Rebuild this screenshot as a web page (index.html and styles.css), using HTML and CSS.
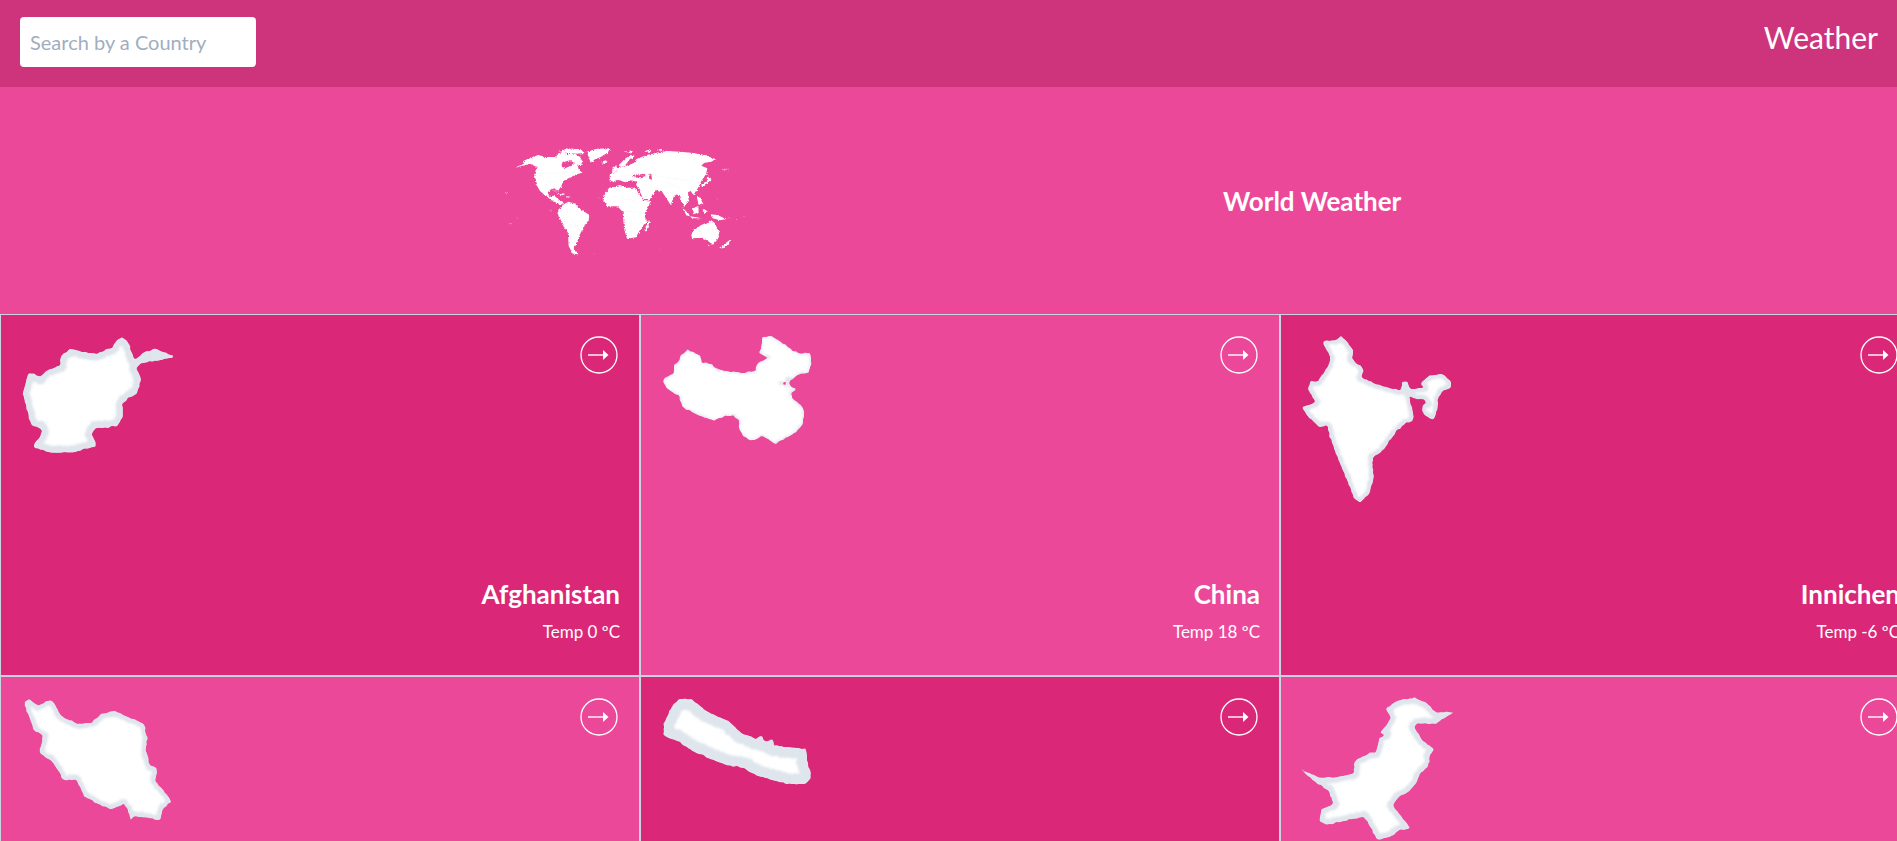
FILE: index.html
```html
<!DOCTYPE html>
<html lang="en">
<head>
<meta charset="utf-8">
<title>Weather</title>
<link rel="stylesheet" href="styles.css">
</head>
<body>
<svg class="defs" width="0" height="0" aria-hidden="true">
  <defs>
    <symbol id="arrow" viewBox="0 0 38 38">
      <circle cx="19" cy="19" r="18" fill="none" stroke="#fff" stroke-width="1.3"/>
      <path d="M8 19H24" stroke="#fff" stroke-width="1.4" fill="none"/>
      <path d="M23 14L28.5 19L23 24Z" fill="#fff"/>
    </symbol>
    <filter id="rough" filterUnits="userSpaceOnUse" primitiveUnits="userSpaceOnUse" x="-100" y="-100" width="1500" height="900" color-interpolation-filters="sRGB">
      <feTurbulence type="turbulence" baseFrequency="0.09" numOctaves="2" seed="4" result="noise"/>
      <feDisplacementMap in="SourceGraphic" in2="noise" scale="9" xChannelSelector="R" yChannelSelector="G" result="moved"/>
      <feGaussianBlur in="moved" stdDeviation="3.2"/>
      <feComponentTransfer>
        <feFuncA type="linear" slope="3.5" intercept="-1.25"/>
      </feComponentTransfer>
    </filter>
    <filter id="soft" filterUnits="userSpaceOnUse" primitiveUnits="userSpaceOnUse" x="0" y="0" width="840" height="420" color-interpolation-filters="sRGB">
      <feTurbulence type="turbulence" baseFrequency="0.12" numOctaves="2" seed="7" result="noise"/>
      <feDisplacementMap in="SourceGraphic" in2="noise" scale="4" xChannelSelector="R" yChannelSelector="G" result="moved"/>
      <feGaussianBlur in="moved" stdDeviation="1.6"/>
    </filter>
  </defs>
</svg>
<header class="topbar">
  <input class="search" type="text" placeholder="Search by a Country">
  <div class="brand">Weather</div>
</header>
<section class="hero">
  <svg class="world" viewBox="0 0 840 420" width="280" height="140" role="img" aria-label="World map">
    <g filter="url(#soft)">
      <path class="continent" fill-rule="evenodd" d="M103 110L128 100 130 90 150 80 175 72 195 78 225 78 232 68 250 62 262 70 285 68 300 78 308 92 300 104 292 100 296 115 307 125 290 130 268 140 250 150 244 165 234 180 222 172 210 175 203 185 210 197 225 192 232 205 250 213 246 222 232 217 215 208 198 195 180 180 168 160 162 135 170 108 150 98 125 105ZM248 92L272 88 282 96 272 104 256 112 244 104Z"/>
      <path class="continent" d="M235 60L262 52 300 55 314 66 290 68 262 66ZM320 62L350 53 390 52 384 64 362 78 345 85 332 95 326 78ZM228 185L255 188 245 193ZM255 196L272 197 262 201Z"/>
      <path class="continent" d="M232 240L248 222 265 212 285 218 298 232 328 252 326 268 312 285 300 310 292 330 280 350 296 370 278 368 266 345 264 305 250 285 238 265Z"/>
      <path class="continent" d="M368 205L372 188 388 170 420 162 440 170 465 170 478 190 490 208 515 208 500 232 494 250 498 272 478 300 468 318 452 322 440 320 432 290 428 242 412 226 382 226ZM503 270L510 268 500 298 493 298Z"/>
      <path class="continent" fill-rule="evenodd" d="M388 148L390 128 408 122 416 108 440 104 462 96 468 85 500 72 530 65 560 60 600 62 640 66 675 72 708 85 690 92 672 96 664 104 682 112 678 130 664 150 656 168 640 192 632 180 624 184 626 206 612 226 602 206 596 192 584 190 572 222 558 200 545 180 528 176 518 190 510 205 490 204 476 175 468 160 472 152 450 148 436 154 412 146 400 152ZM455 132L490 128 498 136 470 140ZM506 128L514 128 516 146 508 144Z"/>
      <path class="continent" d="M398 108L410 103 412 118 396 126ZM416 103L434 84 452 72 464 74 450 84 436 102 424 108ZM364 92L378 88 382 94 368 98ZM430 62L460 58 455 65ZM490 62L510 55 514 62ZM530 56L545 54 548 60ZM605 228L630 252 620 254ZM636 232L655 225 656 244 640 250ZM690 250L712 252 738 264 720 268 698 262ZM630 256L666 262 636 262ZM650 195L660 198 668 216 656 222ZM682 128L692 148 666 168 664 160 680 150ZM668 234L682 240 672 250ZM634 312L640 296 664 282 686 272 692 266 704 276 718 305 712 322 698 340 684 330 668 320 636 322ZM718 350L752 325 745 340 722 352ZM683 340L691 340 686 346Z"/>
      <path class="dots" d="M75 185H82M108 260H112M88 278H92M210 238H214M355 200H358M535 355H538M765 265H768M790 255H794M725 115H745M340 368H343M745 260H755M710 205H714"/>
      <path class="borders" d="M170 128L300 122M205 175L232 180M265 250L300 300M250 270L290 290M420 200L470 210M430 240L490 245M440 280L490 270M500 130L640 150M545 150L600 170M460 120L500 140M415 135L460 130"/>
    </g>
  </svg>
  <h1 class="hero-title">World Weather</h1>
</section>
<main class="grid">
  <article class="card dark">
    <div class="card-top">
      <svg class="shape" viewBox="3 15 600 480" width="200" height="160">
        <defs>
          <path id="af" d="M97 408L125 365 118 350 92 345 72 270 66 250 72 225 82 187 100 190 118 200 135 180 178 165 180 135 210 115 240 122 285 130 335 110 350 85 368 80 385 100 400 148 430 125 465 115 522 138 470 150 430 155 405 170 420 205 410 250 385 260 365 280 365 320 350 345 320 350 285 350 272 370 288 405 215 425 150 425Z"/>
          <clipPath id="af-clip"><use href="#af"/></clipPath>
        </defs>
        <g filter="url(#rough)"><use class="land edge-af" href="#af" clip-path="url(#af-clip)"/></g>
      </svg>
      <svg class="go"><use href="#arrow"/></svg>
    </div>
    <div class="info">
      <h2 class="name">Afghanistan</h2>
      <p class="temp">Temp 0 ºC</p>
    </div>
  </article>
  <article class="card light">
    <div class="card-top">
      <svg class="shape" viewBox="603 15 600 480" width="200" height="160">
        <defs>
          <path id="cn" d="M665 210L680 197 698 190 700 165 715 150 720 135 740 117 780 135 783 155 810 160 835 178 870 183 910 187 945 180 950 157 985 140 958 128 965 80 990 75 1030 100 1055 120 1085 130 1108 125 1112 158 1105 185 1075 190 1055 205 1020 218 1035 225 1040 205 1050 208 1045 225 1068 235 1050 245 1055 262 1085 290 1090 305 1085 340 1065 365 1010 395 1005 400 965 375 935 390 910 380 895 355 895 330 880 315 855 315 820 330 780 315 725 290 715 255 680 235Z"/>
          <clipPath id="cn-clip"><use href="#cn"/></clipPath>
        </defs>
        <g filter="url(#rough)"><use class="land edge-cn" href="#cn" clip-path="url(#cn-clip)"/></g>
      </svg>
      <svg class="go"><use href="#arrow"/></svg>
    </div>
    <div class="info">
      <h2 class="name">China</h2>
      <p class="temp">Temp 18 ºC</p>
    </div>
  </article>
  <article class="card dark">
    <div class="card-top">
      <svg class="shape" viewBox="3 15 600 600" width="200" height="200">
        <defs>
          <path id="in" d="M180 76L200 95 218 120 212 145 250 175 240 200 290 222 360 240 365 212 380 212 385 235 430 232 420 215 445 195 485 188 510 210 510 230 485 240 472 265 468 305 460 328 447 322 425 305 425 282 440 280 430 265 400 265 385 250 392 285 400 330 370 340 340 370 305 420 275 440 278 500 268 545 240 575 220 565 205 520 180 465 150 385 140 345 115 348 80 315 65 290 105 275 80 232 92 212 112 212 145 160 148 140 125 92 165 88Z"/>
          <clipPath id="in-clip"><use href="#in"/></clipPath>
        </defs>
        <g filter="url(#rough)"><use class="land edge-in" href="#in" clip-path="url(#in-clip)"/></g>
      </svg>
      <svg class="go"><use href="#arrow"/></svg>
    </div>
    <div class="info">
      <h2 class="name">Innichen</h2>
      <p class="temp">Temp -6 ºC</p>
    </div>
  </article>
  <article class="card light">
    <div class="card-top">
      <svg class="shape" viewBox="3 -9 600 480" width="200" height="160">
        <defs>
          <path id="ir" d="M70 65L85 55 110 75 150 57 165 75 180 105 230 130 275 125 300 100 345 92 430 130 440 170 435 210 448 255 470 265 462 300 498 340 512 365 485 385 478 418 400 405 388 420 385 395 370 370 330 385 290 370 250 345 225 295 190 300 170 265 150 238 120 222 118 205 128 165 100 150 82 100Z"/>
          <clipPath id="ir-clip"><use href="#ir"/></clipPath>
        </defs>
        <g filter="url(#rough)"><use class="land edge-ir" href="#ir" clip-path="url(#ir-clip)"/></g>
      </svg>
      <svg class="go"><use href="#arrow"/></svg>
    </div>
  </article>
  <article class="card dark">
    <div class="card-top">
      <svg class="shape" viewBox="-27 -9 600 480" width="200" height="160">
        <defs>
          <path id="np" d="M85 55L120 55 165 90 235 122 270 155 315 175 332 165 345 185 365 175 370 195 465 205 470 245 482 285 470 308 410 310 355 295 320 285 275 260 235 255 180 235 125 210 80 180 38 165 40 125 65 75Z"/>
          <clipPath id="np-clip"><use href="#np"/></clipPath>
        </defs>
        <g filter="url(#rough)"><use class="land edge-np" href="#np" clip-path="url(#np-clip)"/></g>
      </svg>
      <svg class="go"><use href="#arrow"/></svg>
    </div>
  </article>
  <article class="card light">
    <div class="card-top">
      <svg class="shape" viewBox="-27 -9 600 480" width="200" height="160">
        <defs>
          <path id="pk" d="M492 94L450 118 435 128 380 128 370 140 395 180 430 205 415 225 418 250 385 285 375 310 350 335 320 350 305 375 325 400 360 442 320 450 305 465 260 478 240 440 220 408 160 420 110 432 85 420 92 385 130 370 115 330 80 310 24 262 85 290 130 290 190 278 192 240 240 215 255 215 265 175 285 160 265 155 280 145 300 110 285 85 320 60 375 52 410 70 435 95Z"/>
          <clipPath id="pk-clip"><use href="#pk"/></clipPath>
        </defs>
        <g filter="url(#rough)"><use class="land edge-pk" href="#pk" clip-path="url(#pk-clip)"/></g>
      </svg>
      <svg class="go"><use href="#arrow"/></svg>
    </div>
  </article>
</main>
</body>
</html>
```
FILE: styles.css
```css
* { box-sizing: border-box; }
html, body { margin: 0; height: 100%; overflow: hidden; }
body {
  font-family: Lato, "Open Sans", sans-serif;
  color: #fff;
  background: #ec4899;
}
.defs { display: block; height: 0; }
.topbar {
  height: 87px;
  background: #ce347b;
  display: flex;
  justify-content: space-between;
  align-items: flex-start;
  padding: 17px 19px 0 20px;
}
.search {
  width: 236px;
  height: 50px;
  padding: 0 10px;
  border: 0;
  border-radius: 4px;
  background: #fff;
  font: 20px Lato, sans-serif;
}
.search::placeholder { color: #a0aec0; opacity: 1; }
.brand { font-size: 30px; line-height: 36px; margin-top: 2px; }
.hero {
  height: 227px;
  display: flex;
  align-items: center;
  gap: 463px;
  padding-left: 480px;
  background: #ec4899;
}
.world { display: block; flex: none; }
.continent { fill: #fff; }
.dots { stroke: #fff; stroke-width: 2; opacity: .7; fill: none; }
.borders { stroke: #eceef2; stroke-width: 1; fill: none; }
.hero-title { margin: 0; font-size: 26px; line-height: 30px; font-weight: 700; }
.grid {
  display: grid;
  grid-template-columns: repeat(3, 640px);
  grid-auto-rows: 362px;
  width: 1920px;
}
.card {
  border: 1px solid #cbd5e0;
  display: flex;
  flex-direction: column;
  justify-content: space-between;
  padding: 0 19px 31px 0;
}
.dark { background: #db2777; }
.light { background: #ec4899; }
.card-top { display: flex; justify-content: space-between; align-items: flex-start; }
.shape { display: block; flex: none; overflow: visible; }
.go { display: block; flex: none; width: 38px; height: 38px; margin: 21px 2px 0 0; }
.info { text-align: right; }
.name { margin: 0; font-size: 26px; line-height: 30px; font-weight: 700; margin-bottom: -1px; }
.temp { margin: 12px 0 0; font-size: 17px; line-height: 24px; }
.land { fill: #fff; stroke: #dfe5ec; stroke-linejoin: round; }
.edge-af { stroke-width: 40; }
.edge-cn { stroke-width: 8; }
.edge-in { stroke-width: 26; }
.edge-ir { stroke-width: 28; }
.edge-np { stroke-width: 64; }
.edge-pk { stroke-width: 32; }
```
